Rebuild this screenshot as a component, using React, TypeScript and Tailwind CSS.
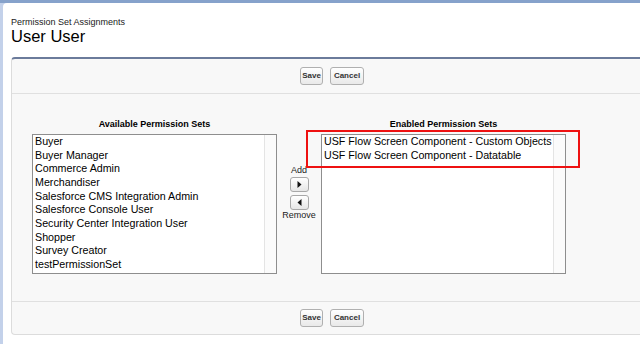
import React from "react";

const available = [
  "Buyer",
  "Buyer Manager",
  "Commerce Admin",
  "Merchandiser",
  "Salesforce CMS Integration Admin",
  "Salesforce Console User",
  "Security Center Integration User",
  "Shopper",
  "Survey Creator",
  "testPermissionSet",
];

const enabled = [
  "USF Flow Screen Component - Custom Objects",
  "USF Flow Screen Component - Datatable",
];

function Btn({ label, w }: { label: string; w: string }) {
  return (
    <button
      className={`${w} h-[18px] rounded-[3px] border border-[#b0b0b0] bg-gradient-to-b from-white to-[#e9e9e9] text-[8px] font-bold text-[#333] leading-none flex items-center justify-center`}
    >
      {label}
    </button>
  );
}

function ButtonBar({ h }: { h: string }) {
  return (
    <div className={`${h} flex items-center pl-[288px] gap-[7px]`}>
      <Btn label="Save" w="w-[23px]" />
      <Btn label="Cancel" w="w-[34px]" />
    </div>
  );
}

function ListBox({ items }: { items: string[] }) {
  return (
    <div className="w-[245px] h-[140px] border border-[#8e8e8e] bg-white flex">
      <div className="flex-1 pl-[2px] text-[10.7px] leading-[13.67px] text-black">
        {items.map((it) => (
          <div key={it} className="whitespace-nowrap">
            {it}
          </div>
        ))}
      </div>
      <div className="w-[12px] bg-[#fbfbfb] border-l border-[#e4e4e4]" />
    </div>
  );
}

function Arrow({ dir }: { dir: "right" | "left" }) {
  return (
    <button className="w-[19px] h-[15px] rounded-[3px] border border-[#a8a8a8] bg-gradient-to-b from-white to-[#e6e6e6] flex items-center justify-center">
      <svg width="5" height="7" viewBox="0 0 5 7">
        {dir === "right" ? (
          <path d="M0.5 0 L4.5 3.5 L0.5 7 Z" fill="#111" />
        ) : (
          <path d="M4.5 0 L0.5 3.5 L4.5 7 Z" fill="#111" />
        )}
      </svg>
    </button>
  );
}

export default function App() {
  return (
    <div
      className="w-[640px] h-[344px] overflow-hidden flex flex-col bg-[#c3d1ea]"
      style={{ fontFamily: '"Liberation Sans", Arial, sans-serif' }}
    >
      <div className="h-[3px] bg-[#86a2cb] shrink-0" />
      <div className="flex flex-1">
        <div className="w-[3px] bg-[#c3d1ea] shrink-0" />
        <div className="flex-1 bg-white rounded-tl-[4px] pl-[8px] overflow-hidden">
          <div className="pt-[13.5px] text-[9px] leading-[11px] text-[#222]">
            Permission Set Assignments
          </div>
          <div className="text-[16.5px] leading-[19px] text-black -mt-[1px]">User User</div>

          <div className="mt-[11.5px] w-[640px] border-t-2 border-[#6b7b9b] border-l border-b border-l-[#dcdcdc] border-b-[#dcdcdc] rounded-[4px] bg-[#f8f8f8]">
            <ButtonBar h="h-[34px]" />
            <div className="border-t border-[#e0e0e0] flex items-start pl-[20px] pt-[24.5px] pb-[27px]">
              <div className="flex flex-col items-center">
                <div className="text-[9px] leading-[11px] font-bold text-black mb-[4.5px]">
                  Available Permission Sets
                </div>
                <ListBox items={available} />
              </div>
              <div className="w-[44px] flex flex-col items-center pt-[46px] text-[9px] leading-[11px] text-[#222]">
                <div>Add</div>
                <div className="mt-[1.5px]">
                  <Arrow dir="right" />
                </div>
                <div className="mt-[3px]">
                  <Arrow dir="left" />
                </div>
                <div>Remove</div>
              </div>
              <div className="flex flex-col items-center">
                <div className="text-[9px] leading-[11px] font-bold text-black mb-[4.5px]">
                  Enabled Permission Sets
                </div>
                <div className="relative">
                  <ListBox items={enabled} />
                  <div className="absolute left-[-15px] top-[-4px] w-[274px] h-[38px] border-2 border-[#ee1111]" />
                </div>
              </div>
            </div>
            <div className="border-t border-[#e0e0e0]">
              <ButtonBar h="h-[32px]" />
            </div>
          </div>
        </div>
      </div>
    </div>
  );
}
